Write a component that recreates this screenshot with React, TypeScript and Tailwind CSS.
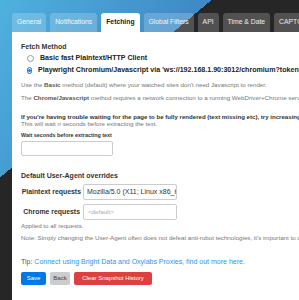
import React from "react";

const tabs = [
  { label: "General" },
  { label: "Notifications" },
  { label: "Fetching", active: true },
  { label: "Global Filters" },
  { label: "API" },
  { label: "Time & Date" },
  { label: "CAPTCHA & Proxies" },
];

function Radio({ checked }: { checked?: boolean }) {
  if (checked) {
    return (
      <span className="flex h-[7px] w-[7px] items-center justify-center rounded-full border border-[#1a73e8] bg-white">
        <span className="h-[3px] w-[3px] rounded-full bg-[#1a73e8]" />
      </span>
    );
  }
  return <span className="h-[7px] w-[7px] rounded-full border border-[#9a9a9a] bg-white" />;
}

export default function App() {
  return (
    <div
      className="h-[300px] w-full overflow-hidden whitespace-nowrap bg-[linear-gradient(140deg,transparent_136px,#262626_136px),linear-gradient(120deg,#4fb1de,#2b55a6)] pl-[12px] pt-[13px] text-[#333]"
      style={{ fontFamily: '"Liberation Sans", Arial, sans-serif' }}
    >
      {/* tab bar */}
      <div className="flex h-[19px] gap-[4px]">
        {tabs.map((t) => (
          <div
            key={t.label}
            className={
              t.active
                ? "flex items-center rounded-t-[3px] bg-white px-[5px] text-[6.8px] font-bold text-[#222]"
                : "flex items-center rounded-t-[3px] bg-white/20 px-[5px] text-[6.8px] text-white/90"
            }
          >
            {t.label}
          </div>
        ))}
      </div>

      {/* panel */}
      <div className="h-[300px] bg-white pl-[9px] pt-[10px]">
        <div className="h-[10px] text-[7px] font-bold leading-[10px] text-[#333]">Fetch Method</div>
        <div className="flex h-[12px] items-center gap-[6px] pl-[6px] text-[7.1px] font-bold text-[#222]">
          <Radio />
          <span>Basic fast Plaintext/HTTP Client</span>
        </div>
        <div className="flex h-[12px] items-center gap-[6px] pl-[6px] text-[7.1px] font-bold text-[#222]">
          <Radio checked />
          <span>Playwright Chromium/Javascript via 'ws://192.168.1.90:3012/chromium?token=abc'</span>
        </div>

        <div className="mt-[5px] h-[8px] text-[6.2px] leading-[8px] text-[#777]">
          Use the <b className="text-[#555]">Basic</b> method (default) where your watched sites don't need Javascript to render.
        </div>
        <div className="mt-[5px] h-[8px] text-[6.2px] leading-[8px] text-[#777]">
          The <b className="text-[#555]">Chrome/Javascript</b> method requires a network connection to a running WebDriver+Chrome server, set by the ENV var 'WEBDRIVER_URL'.
        </div>

        <div className="mt-[11px] h-[7px] text-[6.1px] font-bold leading-[7px] text-[#333]">
          If you're having trouble waiting for the page to be fully rendered (text missing etc), try increasing the 'wait' time here.
        </div>
        <div className="h-[7px] text-[6.2px] leading-[7px] text-[#777]">
          This will wait <i>n</i> seconds before extracting the text.
        </div>
        <div className="mt-[3px] h-[10px] text-[5.4px] font-bold leading-[10px] text-[#333]">
          Wait seconds before extracting text
        </div>
        <div className="mt-[1px] h-[15px] w-[92px] rounded-[2px] border border-[#ccc] bg-white" />

        <div className="mt-[15px] h-[10px] text-[7px] font-bold leading-[10px] text-[#333]">
          Default User-Agent overrides
        </div>
        <div className="mt-[3px] flex flex-col gap-[4px]">
          <div className="flex h-[16px] items-center">
            <span className="w-[62px] pr-[2px] text-right text-[6.9px] font-bold text-[#333]">Plaintext requests</span>
            <div className="flex h-[16px] w-[94px] items-center overflow-hidden rounded-[2px] border border-[#ccc] px-[3px] text-[7px] text-[#333]">
              Mozilla/5.0 (X11; Linux x86_64) AppleWebKit
            </div>
          </div>
          <div className="flex h-[16px] items-center">
            <span className="w-[62px] pr-[3px] text-right text-[6.9px] font-bold text-[#333]">Chrome requests</span>
            <div className="flex h-[16px] w-[94px] items-center overflow-hidden rounded-[2px] border border-[#ccc] px-[4px] text-[6.2px] text-[#aaa]">
              &lt;default&gt;
            </div>
          </div>
        </div>
        <div className="mt-[2px] h-[8px] text-[6.2px] leading-[8px] text-[#777]">Applied to all requests.</div>
        <div className="mt-[4px] h-[8px] text-[6.2px] leading-[8px] text-[#777]">
          Note: Simply changing the User-Agent often does not defeat anti-robot technologies, it's important to consider all of the ways that the browser is detected.
        </div>

        <div className="mt-[15px] h-[10px] text-[7px] leading-[10px] text-[#555]">
          Tip: <span className="text-[#1b98f8]">Connect using Bright Data and Oxylabs Proxies, find out more here.</span>
        </div>

        <div className="mt-[5px] flex gap-[4px] text-[6px]">
          <div className="flex h-[13px] w-[25px] items-center justify-center rounded-[2px] bg-[#0078e7] text-white">Save</div>
          <div className="flex h-[13px] w-[20px] items-center justify-center rounded-[2px] bg-[#cccccc] text-[#444]">Back</div>
          <div className="flex h-[13px] w-[78px] items-center justify-center rounded-[2px] bg-[#dd4040] text-white">Clear Snapshot History</div>
        </div>
      </div>
    </div>
  );
}
